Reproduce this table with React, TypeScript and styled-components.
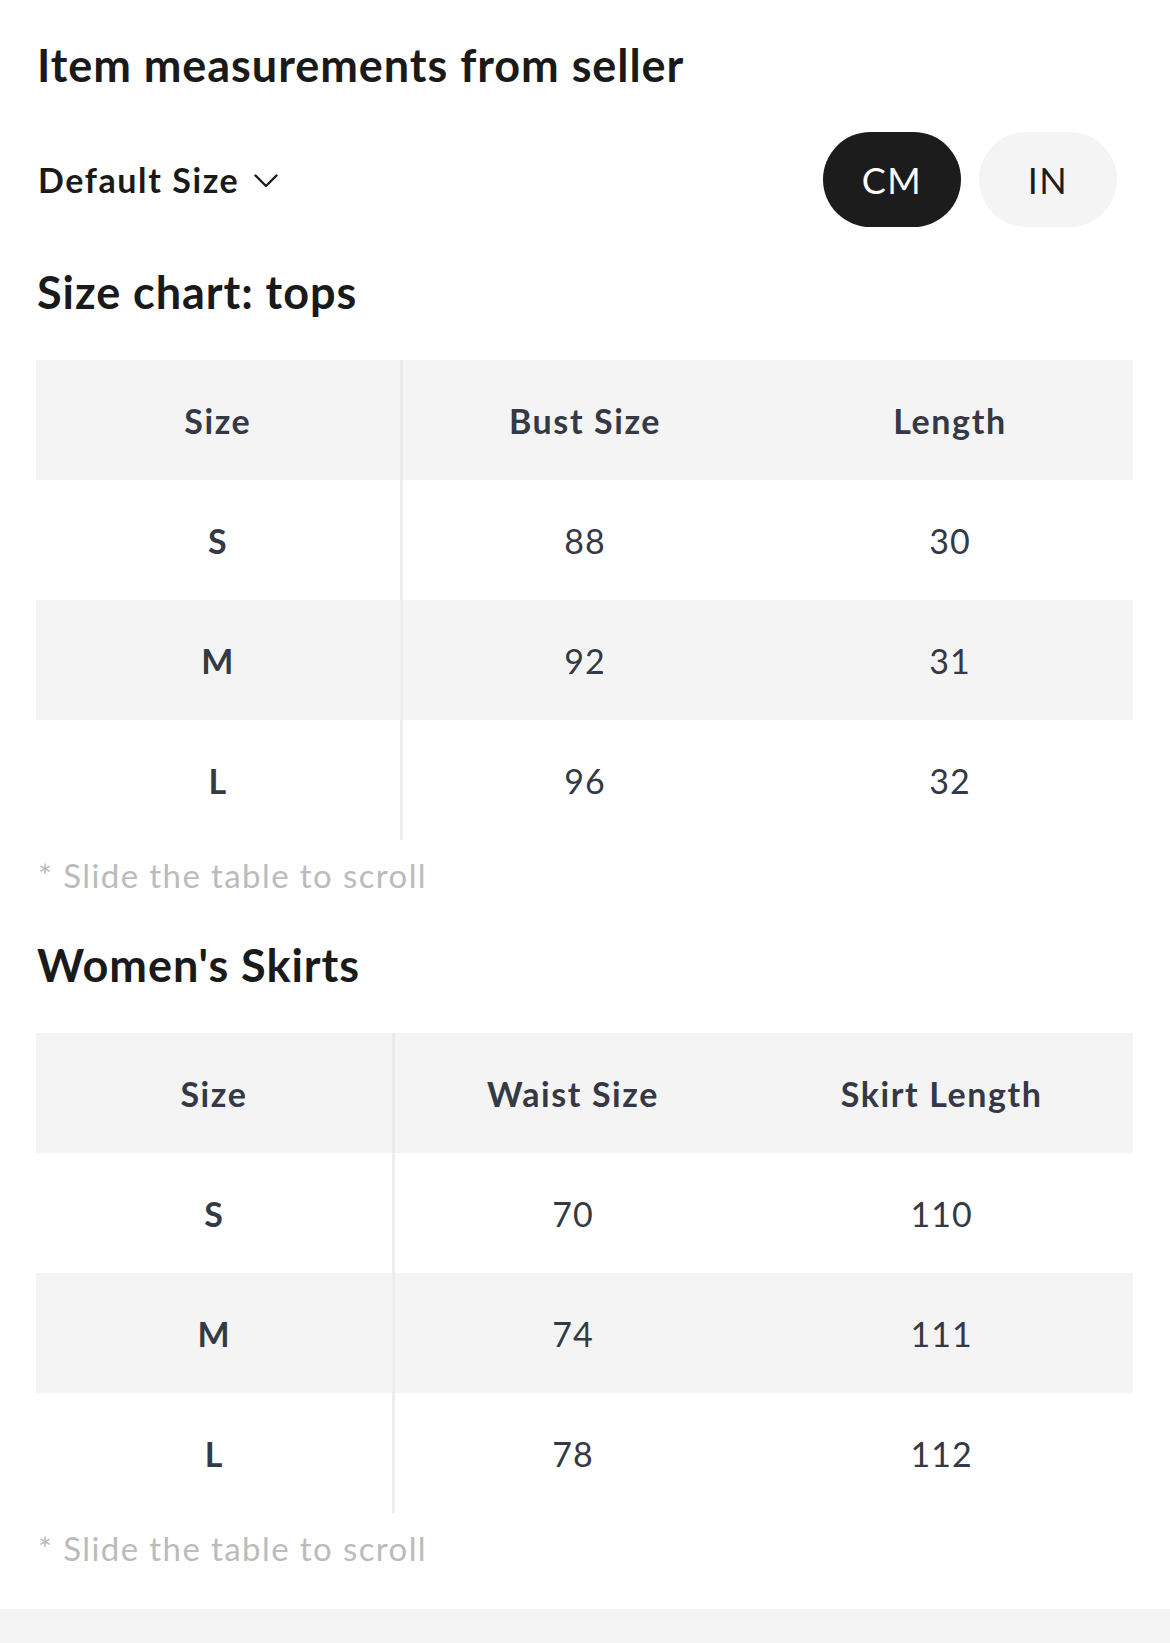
import { FC } from 'react';
import styled, { createGlobalStyle } from 'styled-components';

const GlobalStyle = createGlobalStyle`
    html, body {
        margin: 0;
        padding: 0;
        background: #ffffff;
    }
    body {
        font-family: Lato, "Noto Sans", "Liberation Sans", sans-serif;
        color: #1a1a1a;
    }
`

type SizeTable = {
    title: string;
    columns: string[];
    widths: number[];
    rows: string[][];
}

const tables: SizeTable[] = [
    {
        title: 'Size chart: tops',
        columns: ['Size', 'Bust Size', 'Length'],
        widths: [33.3, 33.4, 33.3],
        rows: [
            ['S', '88', '30'],
            ['M', '92', '31'],
            ['L', '96', '32'],
        ],
    },
    {
        title: "Women's Skirts",
        columns: ['Size', 'Waist Size', 'Skirt Length'],
        widths: [32.6, 32.6, 34.8],
        rows: [
            ['S', '70', '110'],
            ['M', '74', '111'],
            ['L', '78', '112'],
        ],
    },
]

const StyledPage = styled.div`
    width: 1170px;
    box-sizing: border-box;
    display: flex;
    flex-direction: column;
`

const StyledContent = styled.div`
    padding: 38px 36px 0 36px;
    display: flex;
    flex-direction: column;
`

const StyledTitle = styled.h1<{ $top?: number }>`
    margin: ${props => props.$top ?? 0}px 0 0 1px;
    font-size: 45px;
    line-height: 54px;
    font-weight: 700;
    color: #1a1a1a;
    letter-spacing: 0.95px;
`

const StyledToolbar = styled.div`
    margin-top: 40px;
    height: 95px;
    padding-right: 17px;
    display: flex;
    align-items: center;
    justify-content: space-between;
`

const StyledSizeSelect = styled.button`
    background: none;
    border: none;
    padding: 0 0 0 2px;
    display: flex;
    align-items: center;
    gap: 15px;
    font-family: inherit;
    font-size: 34px;
    font-weight: 700;
    letter-spacing: 1.6px;
    color: #1a1a1a;
    cursor: pointer;
    svg {
        margin-top: 2px;
    }
`

const StyledUnits = styled.div`
    display: flex;
    gap: 18px;
`

const StyledUnit = styled.button<{ $active?: boolean }>`
    width: 138px;
    height: 95px;
    border: none;
    border-radius: 48px;
    font-family: inherit;
    font-size: 36px;
    font-weight: 400;
    letter-spacing: 1.5px;
    background: ${props => props.$active ? '#1c1c1c' : '#f4f4f4'};
    color: ${props => props.$active ? '#ffffff' : '#1c1c1c'};
    cursor: pointer;
`

const StyledTable = styled.table`
    margin-top: 41px;
    width: 100%;
    border-collapse: collapse;
    table-layout: fixed;
    tr:nth-child(odd) td {
        background: #ffffff;
    }
    tr:nth-child(even) td {
        background: #f4f4f4;
    }
`

const StyledHeadCell = styled.th<{ $first?: boolean }>`
    height: 120px;
    padding: 0;
    background: #f4f4f4;
    font-size: 34px;
    font-weight: 700;
    letter-spacing: 1.6px;
    color: #353945;
    text-align: center;
    border-right: ${props => props.$first ? '3px solid #eaeaea' : 'none'};
`

const StyledCell = styled.td<{ $first?: boolean }>`
    height: 120px;
    padding: 0;
    font-size: 34px;
    font-weight: ${props => props.$first ? 700 : 400};
    letter-spacing: 1px;
    color: #353945;
    text-align: center;
    border-right: ${props => props.$first ? '3px solid #ededed' : 'none'};
`

const StyledNote = styled.p`
    margin: 15px 0 0 2px;
    font-size: 33px;
    line-height: 40px;
    letter-spacing: 1.4px;
    color: #bbbbbb;
`

const StyledFooterBar = styled.div`
    margin-top: 41px;
    height: 40px;
    background: #f4f4f4;
`

const Chevron: FC = () => (
    <svg width="24" height="14" viewBox="0 0 24 14" fill="none">
        <polyline points="1.5,1.5 12,12 22.5,1.5" stroke="#1a1a1a" strokeWidth="2.4" strokeLinecap="round" strokeLinejoin="round" />
    </svg>
)

const SizeChart: FC<{ table: SizeTable; top: number }> = ({ table, top }) => (
    <>
        <StyledTitle as="h2" $top={top}>{table.title}</StyledTitle>
        <StyledTable>
            <colgroup>
                {table.widths.map((w, i) => <col key={i} style={{ width: `${w}%` }} />)}
            </colgroup>
            <thead>
                <tr>
                    {table.columns.map((c, i) => (
                        <StyledHeadCell key={c} $first={i === 0}>{c}</StyledHeadCell>
                    ))}
                </tr>
            </thead>
            <tbody>
                {table.rows.map(row => (
                    <tr key={row[0]}>
                        {row.map((v, i) => (
                            <StyledCell key={i} $first={i === 0}>{v}</StyledCell>
                        ))}
                    </tr>
                ))}
            </tbody>
        </StyledTable>
        <StyledNote>* Slide the table to scroll</StyledNote>
    </>
)

const App: FC = () => {
    return (
        <StyledPage>
            <GlobalStyle />
            <StyledContent>
                <StyledTitle>Item measurements from seller</StyledTitle>
                <StyledToolbar>
                    <StyledSizeSelect>
                        Default Size
                        <Chevron />
                    </StyledSizeSelect>
                    <StyledUnits>
                        <StyledUnit $active={true}>CM</StyledUnit>
                        <StyledUnit>IN</StyledUnit>
                    </StyledUnits>
                </StyledToolbar>
                <SizeChart table={tables[0]} top={38} />
                <SizeChart table={tables[1]} top={43} />
            </StyledContent>
            <StyledFooterBar />
        </StyledPage>
    )
}

export default App;
